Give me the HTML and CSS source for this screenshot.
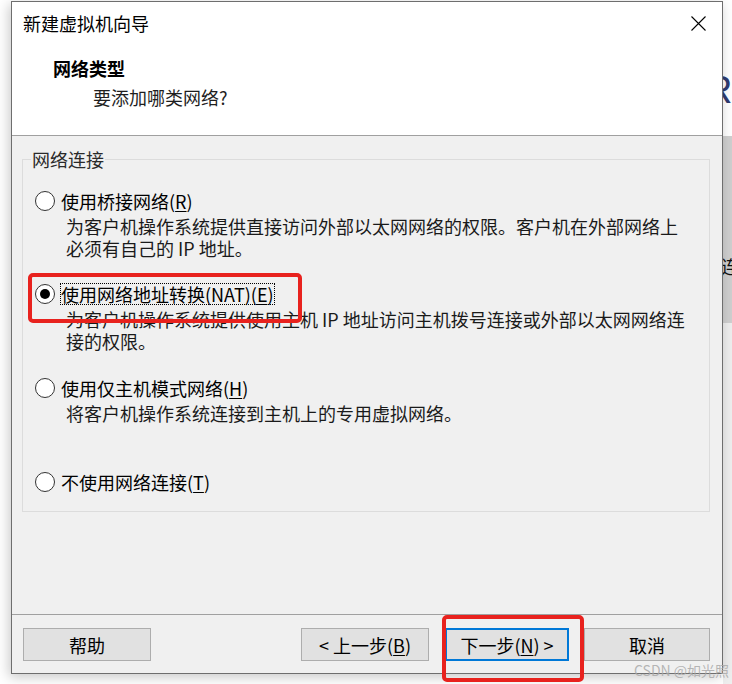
FILE: index.html
```html
<!DOCTYPE html>
<html lang="zh-CN">
<head>
<meta charset="utf-8">
<title>新建虚拟机向导</title>
<link rel="stylesheet" href="styles.css">
</head>
<body>
<div class="screen">
  <div class="window">
    <div class="titlebar">
      <span class="title">新建虚拟机向导</span>
      <svg class="close" width="15" height="15" viewBox="0 0 15 15"><path d="M0.5 0.5 L14.5 14.5 M14.5 0.5 L0.5 14.5" stroke="#000" stroke-width="1.1" fill="none"/></svg>
    </div>
    <div class="header">
      <div class="header-title">网络类型</div>
      <div class="header-sub">要添加哪类网络?</div>
    </div>
    <div class="body">
      <fieldset class="group">
        <legend class="group-legend">网络连接</legend>
        <div class="options">
          <div class="option">
            <div class="option-row"><span class="radio"></span><span class="label">使用桥接网络(<u>R</u>)</span></div>
            <div class="desc">为客户机操作系统提供直接访问外部以太网网络的权限。客户机在外部网络上<br>必须有自己的 IP 地址。</div>
          </div>
          <div class="option">
            <div class="option-row"><span class="radio checked"></span><span class="label focused">使用网络地址转换(NAT)(<u>E</u>)</span></div>
            <div class="desc">为客户机操作系统提供使用主机 IP 地址访问主机拨号连接或外部以太网网络连<br>接的权限。</div>
          </div>
          <div class="option opt-host">
            <div class="option-row"><span class="radio"></span><span class="label">使用仅主机模式网络(<u>H</u>)</span></div>
            <div class="desc">将客户机操作系统连接到主机上的专用虚拟网络。</div>
          </div>
          <div class="option opt-none">
            <div class="option-row"><span class="radio"></span><span class="label">不使用网络连接(<u>T</u>)</span></div>
          </div>
        </div>
      </fieldset>
    </div>
    <div class="footer">
      <button class="btn btn-help">帮助</button>
      <span class="spacer"></span>
      <button class="btn btn-back">&lt; 上一步(<u>B</u>)</button>
      <button class="btn btn-next">下一步(<u>N</u>) &gt;</button>
      <button class="btn btn-cancel">取消</button>
    </div>
  </div>
  <div class="behind">
    <div class="behind-top"><span class="behind-r">R</span></div>
    <div class="behind-mid"><span class="behind-char">连</span></div>
    <div class="behind-bottom"></div>
  </div>
  <div class="mark mark-nat"></div>
  <div class="mark mark-next"></div>
  <div class="watermark">CSDN @如光照</div>
</div>
</body>
</html>
```
FILE: styles.css
```css
* { box-sizing: border-box; }
html, body { margin: 0; padding: 0; background: #fff; }
body {
  font-family: "Noto Sans CJK SC", "Noto Sans", sans-serif;
  font-size: 18px;
  color: #000;
}
.screen {
  position: relative;
  width: 732px;
  height: 684px;
  display: flex;
  align-items: flex-start;
  overflow: hidden;
  background: #fff;
}
.window {
  width: 712px;
  height: 673px;
  margin: 1px 0 0 11px;
  border: 1px solid #6e6e6e;
  background: #f0f0f0;
  display: flex;
  flex-direction: column;
  box-shadow: -2px 3px 12px rgba(0,0,0,0.22);
  position: relative;
  z-index: 1;
}
.titlebar {
  height: 42px;
  background: #fff;
  display: flex;
  align-items: center;
  justify-content: space-between;
  padding: 0 16px 0 11px;
  line-height: 22px;
}
.title { font-size: 18px; }
.close { display: block; margin-top: 1px; }
.header {
  height: 92px;
  background: #fff;
  border-bottom: 1px solid #a0a0a0;
  padding: 10px 0 0 41px;
}
.header-title {
  font-weight: 700;
  line-height: 28px;
  height: 28px;
}
.header-sub {
  line-height: 30px;
  padding-left: 40px;
  color: #1e1e1e;
}
.body {
  flex: 1;
  padding: 12px 12px 0 10px;
}
.group {
  margin: 0;
  border: 1px solid #dcdcdc;
  padding: 19px 12px 17px 12px;
  min-width: 0;
}
.group-legend {
  margin-left: -4px;
  padding: 0 1px;
  line-height: 22px;
  color: #2a2a2a;
}
.options {
  display: flex;
  flex-direction: column;
  gap: 23px;
}
.opt-host { margin-top: 1px; }
.opt-none { margin-top: 23px; }
.option-row {
  display: flex;
  align-items: center;
  height: 24px;
}
.radio {
  width: 20px;
  height: 20px;
  border: 1px solid #333;
  border-radius: 50%;
  background: #fff;
  margin-right: 5px;
  display: flex;
  align-items: center;
  justify-content: center;
  flex: none;
}
.radio.checked::after {
  content: "";
  width: 10px;
  height: 10px;
  border-radius: 50%;
  background: #000;
}
.label {
  padding: 0 1px;
  line-height: 22px;
  white-space: nowrap;
}
.label.focused { outline: 1px dotted #000; outline-offset: -1px; }
u { text-underline-offset: 2px; }
.desc {
  margin: 2px 0 0 31px;
  line-height: 22px;
  color: #1a1a1a;
  white-space: nowrap;
}
.footer {
  height: 59px;
  border-top: 1px solid #a0a0a0;
  padding: 13px 12px 0 11px;
  display: flex;
  align-items: flex-start;
}
.spacer { flex: 1; }
.btn {
  height: 33px;
  background: #e1e1e1;
  border: 1px solid #adadad;
  font-family: inherit;
  font-size: 18px;
  color: #000;
  padding: 0;
  line-height: 22px;
}
.btn-help { width: 128px; }
.btn-back { width: 128px; }
.btn-next { width: 124px; margin-left: 16px; border: 2px solid #0078d7; }
.btn-cancel { width: 126px; margin-left: 15px; }
.behind {
  flex: 1;
  height: 684px;
  display: flex;
  flex-direction: column;
  overflow: hidden;
}
.behind-top {
  height: 136px;
  background: #fff;
  padding-top: 71px;
}
.behind-r {
  display: block;
  font-family: "Liberation Sans", sans-serif;
  font-size: 38px;
  line-height: 38px;
  color: #2f3b70;
  margin-left: -18px;
}
.behind-mid {
  height: 187px;
  background: #cfcfcf;
  padding-top: 119px;
}
.behind-char {
  display: block;
  line-height: 22px;
  margin-left: -2px;
  color: #111;
}
.behind-bottom {
  flex: 1;
  background: #eeeeee;
}
.mark {
  position: absolute;
  border: 4px solid #e8221e;
  border-radius: 5px;
  z-index: 2;
}
.mark-nat { left: 28px; top: 273px; width: 274px; height: 50px; }
.mark-next { left: 442px; top: 615px; width: 142px; height: 67px; }
.watermark {
  position: absolute;
  left: 634px;
  top: 661px;
  font-size: 14px;
  line-height: 18px;
  color: rgba(170,170,170,0.85);
  z-index: 3;
  white-space: nowrap;
}
```
